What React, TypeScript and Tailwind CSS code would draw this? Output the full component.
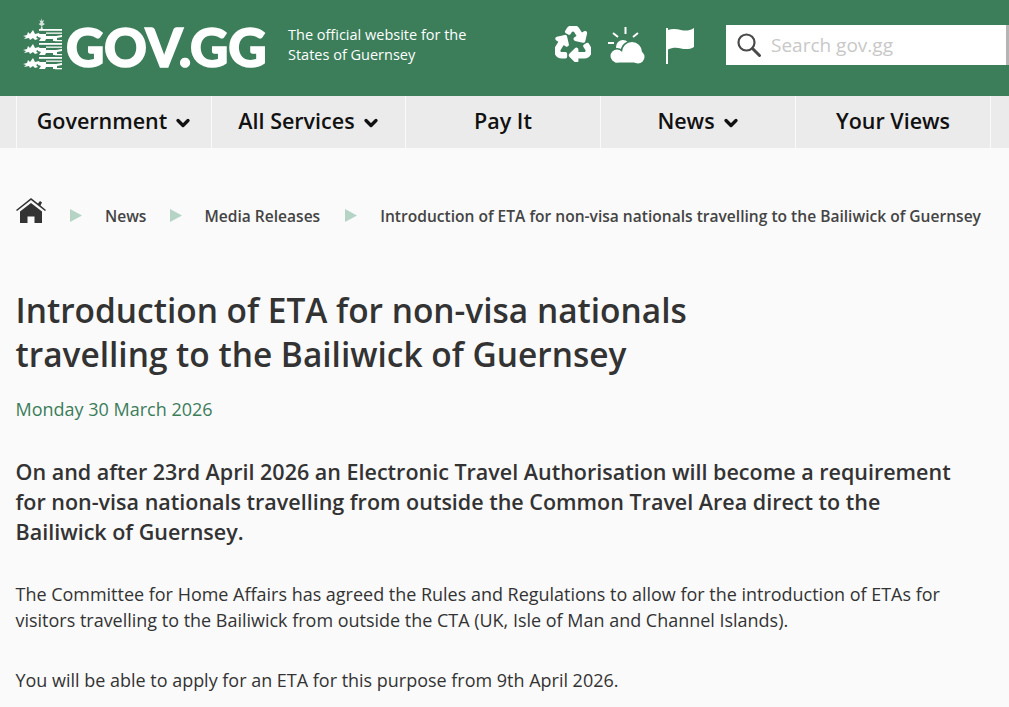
import { ChevronDown } from "lucide-react";
import { FaRecycle } from "react-icons/fa";

const Arms = () => (
  <svg width="40" height="52" viewBox="0 0 40 52" fill="#fff" className="shrink-0">
    {/* sprig */}
    <path d="M18 0l1 3 2-1-1 3 2 1-3 2 1 3h-2.500l1-3-3-2 2-1-1-3 1.500 1z" opacity="0.8" />
    {/* three leopards */}
    {[0, 1, 2].map((i) => (
      <g key={i} transform={`translate(0 ${11 + i * 14})`}>
        <path d="M0 7l4-1 1-3 2 2 3-4 2 4 4-1 1 2-4 2 2 2-3 1-2-2-3 2-1-2-5 1 2-2z" />
        <rect x="16" y="0" width="23" height="1.800" />
        <rect x="23" y="3.500" width="16" height="1.300" />
        <path d="M15 5h8v2h10l6-1v2l-5 1v3h-4v-2h-7l-1 2h-6l2-3-3-1z" />
        <rect x="32" y="11" width="7" height="1.300" />
      </g>
    ))}
  </svg>
);

const WeatherIcon = () => (
  <svg width="37" height="38" viewBox="0 0 37 38" className="shrink-0">
    <g stroke="#fff" strokeWidth="2" fill="none">
      <path d="M17.500 1v7M5 7l5 4M30 7l-5 4M0 17h6" />
    </g>
    <circle cx="15" cy="21" r="7" fill="#fff" />
    <g fill="#fff" stroke="#3c7d5a" strokeWidth="3">
      <circle cx="9" cy="30" r="6.500" />
      <circle cx="24" cy="26" r="10" />
      <circle cx="30" cy="31" r="6.500" />
      <rect x="6" y="29" width="24" height="8.500" />
    </g>
    <g fill="#fff">
      <circle cx="9" cy="30" r="6.500" />
      <circle cx="24" cy="26" r="10" />
      <circle cx="30" cy="31" r="6.500" />
      <rect x="7" y="29" width="24" height="7.500" />
    </g>
  </svg>
);

const FlagIcon = () => (
  <svg width="29" height="36" viewBox="0 0 29 36" fill="#fff" className="shrink-0">
    <rect x="0" y="0" width="2" height="36" />
    <path d="M2 2c4-1.500 9-1 13 0 4 1 8.500 1 13-2v19c-4 2.500-9 2.500-13 1.500-4-1-9-1-13 1z" />
  </svg>
);

const SearchIcon = () => (
  <svg width="26" height="26" viewBox="0 0 26 26" fill="none" stroke="#4a4a4a" strokeWidth="2.200" className="shrink-0">
    <circle cx="10.500" cy="10.500" r="8" />
    <path d="M16.500 16.500l7 7" strokeWidth="3" strokeLinecap="round" />
  </svg>
);

const HomeIcon = () => (
  <svg width="30" height="26" viewBox="0 0 30 26" fill="#333" className="shrink-0">
    <path d="M0 12L15 0l7 5.500L24 3l2 1.500-1.500 3L30 12l-1 1L15 2 1 13z" />
    <path d="M15 5L4 13.500V25h7.500v-6.500h7V25H26V13.500z" />
  </svg>
);

const Arrow = () => (
  <svg width="12" height="13" viewBox="0 0 12 13" fill="#b5d4c5" className="shrink-0 mt-[9px]">
    <path d="M0 0l12 6.500L0 13z" />
  </svg>
);

const navItems = [
  { label: "Government", w: "w-[195px] pl-[2px]", caret: true },
  { label: "All Services", w: "w-[194px] pl-[2px]", caret: true },
  { label: "Pay It", w: "w-[195px]", caret: false },
  { label: "News", w: "w-[195px] pl-[2px]", caret: true },
  { label: "Your Views", w: "w-[196px]", caret: false },
];

const App = () => {
  return (
    <div className="w-[1009px] h-[707px] overflow-hidden bg-[#fafafa] text-[#333] font-['Open_Sans',sans-serif]">
      {/* Header */}
      <header className="h-[96px] bg-[#3c7d5a] flex items-start text-white">
        <div className="ml-[23px] mt-[18px]">
          <Arms />
        </div>
        <span className="w-[201px] shrink-0 ml-[3px] mt-[12px] font-['Lato',sans-serif] text-[53px] leading-[70px] font-black tracking-[-0.300px] [-webkit-text-stroke:1.500px_#fff] whitespace-nowrap">
          GOV.GG
        </span>
        <p className="ml-[21px] mt-[25px] w-[178px] shrink-0 whitespace-nowrap text-[14.500px] leading-[20px]">
          The official website for the
          <br />
          States of Guernsey
        </p>
        <div className="ml-[89px] mt-[26px] flex">
          <FaRecycle size={36} stroke="#fff" strokeWidth={26} className="shrink-0" />
          <div className="ml-[17px] mr-[21px]"><WeatherIcon /></div>
          <div className="mt-[2px]"><FlagIcon /></div>
        </div>
        <div className="ml-[31px] mt-[25px] w-[283px] h-[40px] bg-white border-r-[3px] border-[#b5b5b5] flex items-center pl-[10px] gap-[9px] shrink-0">
          <SearchIcon />
          <span className="text-[19px] text-[#c8c8c8]">Search gov.gg</span>
        </div>
      </header>

      {/* Nav */}
      <nav className="h-[52px] bg-[#ecebeb] pl-[16px] flex">
        {navItems.map((item) => (
          <div
            key={item.label}
            className={`${item.w} border-l border-[#fafafa] last:border-r flex items-center justify-center gap-[6px] pb-[2px] text-[21.500px] font-semibold text-[#111]`}
          >
            {item.label}
            {item.caret && <ChevronDown size={20} strokeWidth={4} className="mt-[4px]" />}
          </div>
        ))}
      </nav>

      {/* Breadcrumb */}
      <div className="mt-[50px] ml-[16px] h-[26px] flex items-center text-[15.570px] font-semibold text-[#444] whitespace-nowrap">
        <HomeIcon />
        <div className="ml-[24px]"><Arrow /></div>
        <span className="ml-[23px] mt-[11px]">News</span>
        <div className="ml-[24px]"><Arrow /></div>
        <span className="ml-[22px] mt-[11px]">Media Releases</span>
        <div className="ml-[25px]"><Arrow /></div>
        <span className="ml-[23px] mt-[11px]">Introduction of ETA for non-visa nationals travelling to the Bailiwick of Guernsey</span>
      </div>

      {/* Article */}
      <main className="pl-[15.500px]">
        <h1 className="mt-[64px] text-[33.450px] leading-[44px] font-semibold max-w-[720px]">
          Introduction of ETA for non-visa nationals travelling to the Bailiwick of Guernsey
        </h1>
        <p className="mt-[20px] text-[18px] leading-[26px] text-[#3c7d5a]">Monday 30 March 2026</p>
        <p className="mt-[35px] text-[21.500px] leading-[30px] font-semibold max-w-[950px]">
          On and after 23rd April 2026 an Electronic Travel Authorisation will become a requirement for non-visa nationals travelling from outside the Common Travel Area direct to the Bailiwick of Guernsey.
        </p>
        <p className="mt-[34px] text-[17.980px] leading-[26px] max-w-[950px]">
          The Committee for Home Affairs has agreed the Rules and Regulations to allow for the introduction of ETAs for visitors travelling to the Bailiwick from outside the CTA (UK, Isle of Man and Channel Islands).
        </p>
        <p className="mt-[34px] text-[17.980px] leading-[26px]">
          You will be able to apply for an ETA for this purpose from 9th April 2026.
        </p>
      </main>
    </div>
  );
};

export default App;
